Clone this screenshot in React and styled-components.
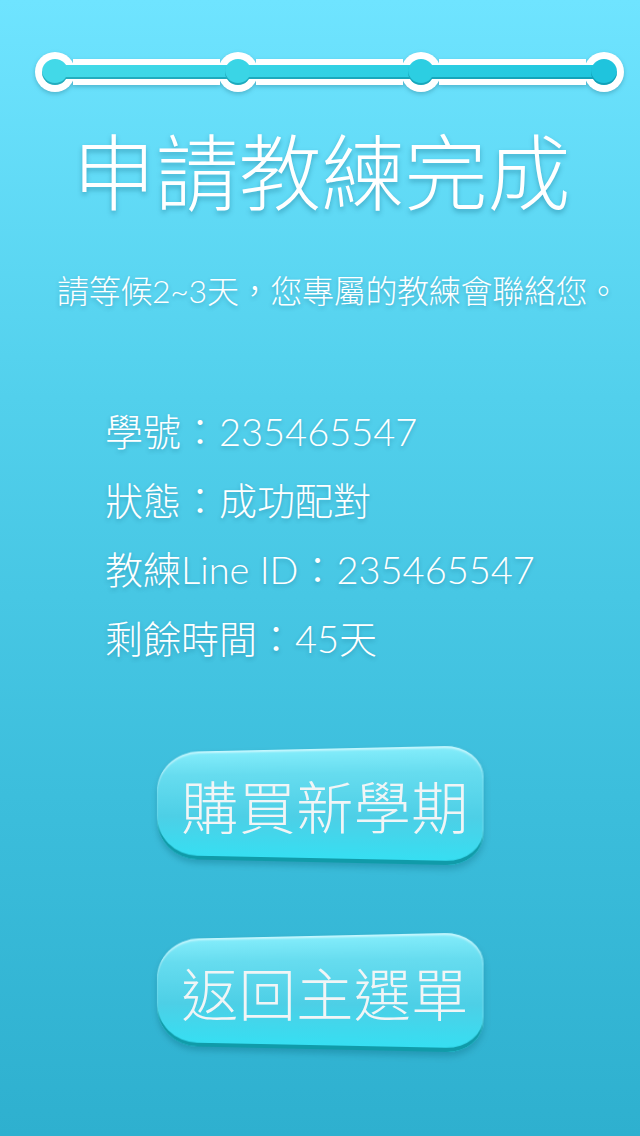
import React from 'react';
import styled, { createGlobalStyle } from 'styled-components';

const GlobalStyle = createGlobalStyle`
  html, body {
    margin: 0;
    padding: 0;
  }
  body {
    font-family: Lato, "Noto Sans CJK TC", sans-serif;
  }
`;

const Page = styled.div`
  width: 640px;
  height: 1136px;
  overflow: hidden;
  background: linear-gradient(180deg, #6fe4ff 0%, #52d0ec 35%, #3cbedc 70%, #2eb0cf 100%);
  display: flex;
  flex-direction: column;
`;

const Progress = styled.div`
  display: grid;
  width: 589px;
  margin: 52px 0 0 35px;
`;

const Layer = styled.div`
  grid-area: 1 / 1;
  display: flex;
  align-items: center;
  position: relative;
  z-index: ${p => p.$top ? 1 : 0};
  padding: 0 ${p => p.$pad || 0}px;
  filter: ${p => p.$shadow ? 'drop-shadow(0 2px 2px rgba(0, 60, 80, 0.25))' : 'none'};
`;

const Dot = styled.span`
  flex: none;
  width: ${p => p.$size}px;
  height: ${p => p.$size}px;
  border-radius: 50%;
  background: ${p => p.$color};
  box-shadow: ${p => p.$inner ? 'inset 0 -2px 0 rgba(0, 120, 140, 0.45)' : 'none'};
`;

const Bar = styled.span`
  flex: 1;
  height: ${p => p.$h}px;
  margin: 0 -2px;
  background: ${p => p.$color};
  box-shadow: ${p => p.$inner ? 'inset 0 -2px 0 rgba(0, 120, 140, 0.45)' : 'none'};
`;

const Title = styled.h1`
  margin: 26px 0 0;
  text-align: center;
  font-family: "Noto Sans CJK TC", sans-serif;
  font-weight: 300;
  font-size: 83px;
  line-height: 100px;
  color: #ffffff;
  padding-left: 3px;
  text-shadow: 0 3px 5px rgba(0, 80, 110, 0.35);
`;

const Subtitle = styled.p`
  margin: 54px 0 0 57px;
  font-family: Lato, "Noto Sans CJK TC", sans-serif;
  font-weight: 300;
  font-size: 32px;
  line-height: 38px;
  color: #ffffff;
  white-space: nowrap;
  letter-spacing: -0.3px;
  text-shadow: 0 2px 4px rgba(0, 80, 110, 0.3);
`;

const InfoList = styled.div`
  margin: 87px 0 0 105px;
  display: flex;
  flex-direction: column;
`;

const InfoRow = styled.div`
  font-family: Lato, "Noto Sans CJK TC", sans-serif;
  font-weight: 300;
  font-size: 38px;
  line-height: 69px;
  color: #ffffff;
  white-space: nowrap;
  text-shadow: 0 2px 4px rgba(0, 80, 110, 0.3);
`;

const Buttons = styled.div`
  margin-top: 74px;
  display: flex;
  flex-direction: column;
  align-items: center;
  gap: 70px;
`;

const PillButton = styled.button`
  display: grid;
  place-items: center;
  width: 330px;
  height: 117px;
  border: none;
  padding: 0;
  background: none;
  cursor: pointer;
`;

const ButtonShape = styled.span`
  grid-area: 1 / 1;
  width: 334px;
  height: 113px;
  border-radius: 48px 36px 34px 46px / 42px 30px 30px 42px;
  background: linear-gradient(180deg, #84edfb 0%, #66dcef 22%, #4dcfe6 60%, #34e0f3 100%);
  box-shadow:
    inset 0 2px 2px rgba(255, 255, 255, 0.55),
    inset 0 -4px 0 #109ba9,
    0 4px 6px rgba(0, 90, 110, 0.3);
  transform: translateX(-12px) perspective(600px) rotateY(-13deg);
`;

const ButtonLabel = styled.span`
  grid-area: 1 / 1;
  position: relative;
  font-family: "Noto Sans CJK TC", sans-serif;
  font-weight: 300;
  font-size: 57px;
  line-height: 70px;
  color: #f1f5f6;
  letter-spacing: 0.5px;
  padding: 0 0 4px 6px;
`;

function ProgressBar() {
  const white = '#ffffff';
  return (
    <Progress>
      <Layer $shadow>
        <Dot $size={40} $color={white} />
        <Bar $h={26} $color={white} />
        <Dot $size={40} $color={white} />
        <Bar $h={26} $color={white} />
        <Dot $size={40} $color={white} />
        <Bar $h={26} $color={white} />
        <Dot $size={40} $color={white} />
      </Layer>
      <Layer $pad={7} $top>
        <Dot $size={26} $color="#42d9e8" $inner />
        <Bar $h={14} $color="linear-gradient(90deg, #43dae8, #38d4e6)" $inner />
        <Dot $size={26} $color="#3ad5e6" $inner />
        <Bar $h={14} $color="linear-gradient(90deg, #38d4e6, #2ccee2)" $inner />
        <Dot $size={26} $color="#2ccee2" $inner />
        <Bar $h={14} $color="linear-gradient(90deg, #2ccee2, #20c6de)" $inner />
        <Dot $size={26} $color="#1fc4dd" $inner />
      </Layer>
    </Progress>
  );
}

export default function App() {
  const info = [
    '學號：235465547',
    '狀態：成功配對',
    '教練Line ID：235465547',
    '剩餘時間：45天',
  ];
  return (
    <Page>
      <GlobalStyle />
      <ProgressBar />
      <Title>申請教練完成</Title>
      <Subtitle>請等候2~3天，您專屬的教練會聯絡您。</Subtitle>
      <InfoList>
        {info.map(line => (
          <InfoRow key={line}>{line}</InfoRow>
        ))}
      </InfoList>
      <Buttons>
        <PillButton>
          <ButtonShape />
          <ButtonLabel>購買新學期</ButtonLabel>
        </PillButton>
        <PillButton>
          <ButtonShape />
          <ButtonLabel>返回主選單</ButtonLabel>
        </PillButton>
      </Buttons>
    </Page>
  );
}
